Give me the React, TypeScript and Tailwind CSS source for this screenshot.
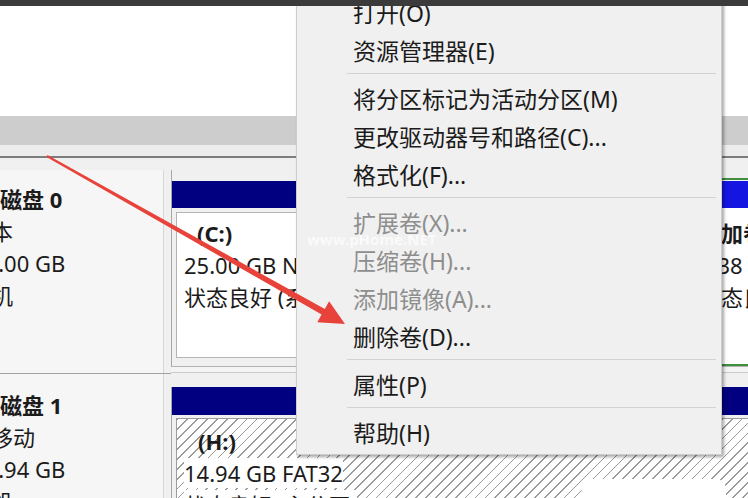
import React from "react";

const MenuItem = ({ label, disabled }: { label: string; disabled?: boolean }) => (
  <div className={`h-[38px] pl-[56px] whitespace-nowrap ${disabled ? "text-[#8e8e8e]" : "text-[#1b1b1b]"}`}>{label}</div>
);

const Sep = () => (
  <div className="h-[10px] pt-[3px] ml-[50px] mr-[5px]">
    <div className="h-px bg-[#d3d3d3]" />
  </div>
);

export default function App() {
  return (
    <div className="relative w-[748px] h-[498px] overflow-hidden bg-white font-['Noto_Sans','Noto_Sans_CJK_SC',sans-serif] text-[#1b1b1b]">
      <div className="relative z-30 h-[6px] bg-[#3b3b3b]" />
      <div className="h-[110px] bg-white" />
      <div className="h-[29px] bg-[#cdcdcd]" />
      <div className="h-[11px] bg-[#ededed]" />
      <div className="h-[2px] bg-[#7d7d7d]" />
      <div className="flex h-[340px] bg-[#f0f0f0] text-[22px] leading-[32px]">
        {/* Left column: disk labels */}
        <div className="w-[171px] shrink-0 pt-[12px] flex flex-col">
          <div className="shrink-0 h-[203px] w-[164px] overflow-hidden bg-[#f6f6f6] border-r border-[#d6d6d6] pt-[13px]">
            <div className="font-bold whitespace-nowrap">磁盘 0</div>
            <div className="ml-[-31px] whitespace-nowrap">基本</div>
            <div className="ml-[-27px] whitespace-nowrap">60.00 GB</div>
            <div className="ml-[-31px] whitespace-nowrap">联机</div>
          </div>
          <div className="shrink-0 h-px bg-[#a2a2a2]" />
          <div className="shrink-0 h-[124px] w-[164px] overflow-hidden bg-[#f6f6f6] border-r border-[#d6d6d6] pt-[15px]">
            <div className="font-bold whitespace-nowrap">磁盘 1</div>
            <div className="ml-[-31px] whitespace-nowrap">可移动</div>
            <div className="ml-[-27px] whitespace-nowrap">14.94 GB</div>
            <div className="ml-[-31px] whitespace-nowrap">联机</div>
          </div>
        </div>

        {/* Right column: partitions */}
        <div className="flex-1 flex flex-col pt-[12px] overflow-hidden">
          <div className="shrink-0 flex h-[196px]">
            <div className="w-[527px] shrink-0 border-l border-[#a8a8a8] pt-[11px]">
              <div className="h-[27px] bg-[#000080]" />
              <div className="pl-[4px] pt-[4px]">
                <div className="h-[146px] bg-white border border-[#b4b4b4] pl-[7px] pt-[4px] whitespace-nowrap overflow-hidden">
                  <div className="font-bold ml-[13px]">(C:)</div>
                  <div>25.00 GB NTFS</div>
                  <div>状态良好 (系统, 启动, 页面文件, 活动, 主分区)</div>
                </div>
              </div>
            </div>
            <div className="flex-1 mt-[8px] border-y-2 border-[#3f8f3f] pt-px flex flex-col">
              <div className="shrink-0 h-[27px] bg-[#1515e2]" />
              <div className="flex-1 bg-white pl-[1px] pt-[9px] whitespace-nowrap overflow-hidden">
                <div className="font-bold">新加卷 (D:)</div>
                <div>9.38 GB NTFS</div>
                <div>状态良好 (主分区)</div>
              </div>
            </div>
          </div>
          <div className="shrink-0 h-px bg-[#b3b3b3]" />
          <div className="shrink-0 h-[5px] bg-[#f4f4f4]" />
          <div className="shrink-0 h-px bg-[#cacaca]" />
          <div className="shrink-0 mt-[14px] border-l border-[#a8a8a8] h-[140px] flex flex-col">
            <div className="shrink-0 h-[28px] bg-[#000080]" />
            <div className="pl-[4px] pt-[3px] flex-1 flex">
              <div className="flex-1 border-l border-t border-[#9c9c9c] pl-[7px] pt-[6px] whitespace-nowrap overflow-hidden bg-[repeating-linear-gradient(135deg,#9a9a9a_0px,#9a9a9a_1.2px,#ffffff_1.2px,#ffffff_7px)]">
                <div className="font-bold ml-[14px] w-fit">(H:)</div>
                <div><span className="bg-white">14.94 GB FAT32</span></div>
                <div><span className="bg-white">状态良好 (主分区)</span></div>
              </div>
            </div>
          </div>
        </div>
      </div>

      {/* Context menu */}
      <div className="absolute left-[296px] top-[-10px] z-20 w-[426px] h-[465px] bg-[#f0f0f0] border border-[#cdcdcd] shadow-[2px_2px_3px_rgba(0,0,0,0.35)] pt-[3px] text-[23px] leading-[38px]">
        <MenuItem label="打开(O)" />
        <MenuItem label="资源管理器(E)" />
        <Sep />
        <MenuItem label="将分区标记为活动分区(M)" />
        <MenuItem label="更改驱动器号和路径(C)..." />
        <MenuItem label="格式化(F)..." />
        <Sep />
        <MenuItem label="扩展卷(X)..." disabled />
        <MenuItem label="压缩卷(H)..." disabled />
        <MenuItem label="添加镜像(A)..." disabled />
        <MenuItem label="删除卷(D)..." />
        <Sep />
        <MenuItem label="属性(P)" />
        <Sep />
        <MenuItem label="帮助(H)" />
      </div>

      {/* watermark */}
      <div className="absolute left-[307px] top-[229px] z-40 text-[15px] leading-[20px] font-bold text-white opacity-70 whitespace-nowrap">
        www.pHome.NET
      </div>

      {/* white blob */}
      <div className="absolute left-[582px] top-[479px] z-10 w-[144px] h-[30px] rounded-[10px] bg-white" />

      {/* red arrow */}
      <svg className="absolute left-0 top-0 z-40 pointer-events-none" width="748" height="498" viewBox="0 0 748 498">
        <polygon
          points="47.5,155.1 324.8,308.9 329.1,301.2 345,324 317.3,322.2 321.6,314.5 46.5,156.9"
          fill="#e8433a"
        />
      </svg>
    </div>
  );
}
